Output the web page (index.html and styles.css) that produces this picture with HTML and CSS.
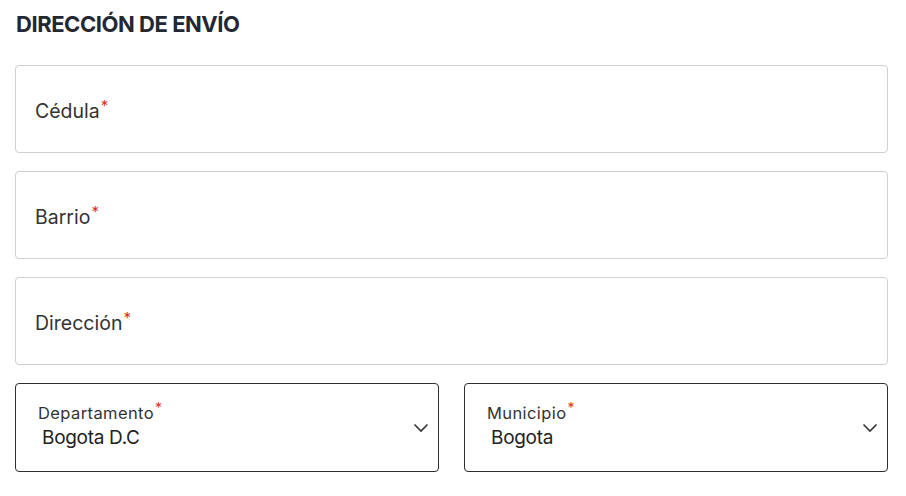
FILE: index.html
```html
<!DOCTYPE html>
<html lang="es">
<head>
<meta charset="utf-8">
<link rel="stylesheet" href="styles.css">
</head>
<body>
<section class="form">
  <h2 class="title">DIRECCIÓN DE ENVÍO</h2>
  <div class="field"><span class="label">Cédula<span class="req">*</span></span></div>
  <div class="field"><span class="label">Barrio<span class="req">*</span></span></div>
  <div class="field"><span class="label">Dirección<span class="req">*</span></span></div>
  <div class="row">
    <div class="select">
      <div class="sel-text">
        <span class="sel-label">Departamento<span class="req">*</span></span>
        <span class="sel-value">Bogota D.C</span>
      </div>
      <svg class="chev" width="16" height="10" viewBox="0 0 16 10"><path d="M1.5 1.5 L8 8 L14.5 1.5" fill="none" stroke="#333" stroke-width="1.6"/></svg>
    </div>
    <div class="select">
      <div class="sel-text">
        <span class="sel-label">Municipio<span class="req">*</span></span>
        <span class="sel-value">Bogota</span>
      </div>
      <svg class="chev" width="16" height="10" viewBox="0 0 16 10"><path d="M1.5 1.5 L8 8 L14.5 1.5" fill="none" stroke="#333" stroke-width="1.6"/></svg>
    </div>
  </div>
</section>
</body>
</html>
```
FILE: styles.css
```css
html, body { margin: 0; padding: 0; background: #fff; }
body { font-family: Inter, "Noto Sans", sans-serif; color: #2b2b2b; }
.form {
  width: 873px;
  padding: 10px 0 0 15px;
  display: flex;
  flex-direction: column;
  gap: 18px;
}
.title {
  margin: 0 0 9px 1px;
  font-size: 22px;
  line-height: 28px;
  font-weight: 700;
  letter-spacing: -0.45px;
  color: #232733;
}
.field {
  box-sizing: border-box;
  height: 88px;
  border: 1px solid #cfcfcf;
  border-radius: 4px;
  display: flex;
  align-items: center;
  padding: 0 0 0 19px;
}
.label {
  font-size: 19.5px;
  color: #333;
  letter-spacing: 0;
}
.req {
  color: #d93025;
  font-size: 15px;
  vertical-align: 7px;
  margin-left: 1px;
}
.row {
  display: grid;
  grid-template-columns: 424px 424px;
  gap: 25px;
}
.select {
  box-sizing: border-box;
  height: 89px;
  border: 1px solid #2e2e2e;
  border-radius: 4px;
  display: flex;
  align-items: center;
  justify-content: space-between;
  padding: 0 9px 0 22px;
}
.sel-text { display: flex; flex-direction: column; padding-bottom: 7px; }
.sel-label { font-size: 16.5px; color: #333; line-height: 20px; letter-spacing: 0.4px; }
.sel-label .req { font-size: 14px; vertical-align: 6px; }
.sel-value { font-size: 19px; color: #222; line-height: 24px; margin-top: 3px; padding-left: 4px; letter-spacing: -0.3px; }
.chev { margin-top: 0; }
```
